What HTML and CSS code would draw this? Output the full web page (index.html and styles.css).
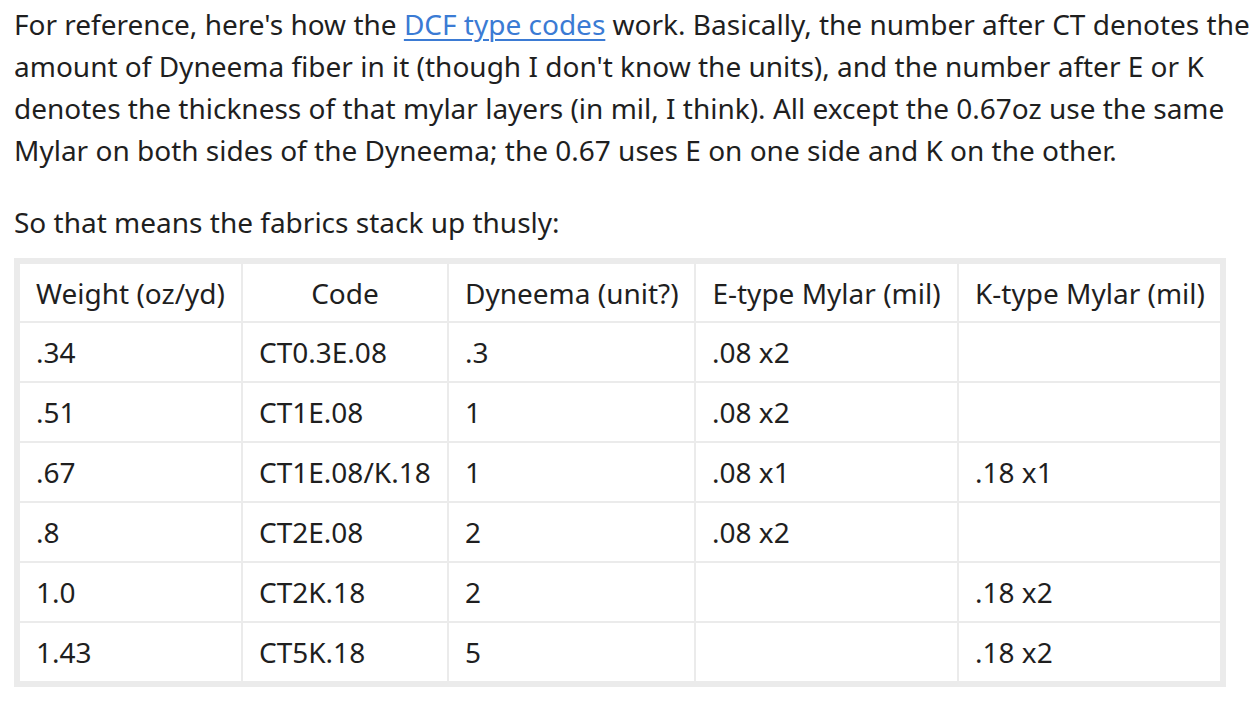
FILE: index.html
```html
<!DOCTYPE html>
<html lang="en">
<head>
<meta charset="utf-8">
<title>DCF fabrics</title>
<link rel="stylesheet" href="styles.css">
</head>
<body>
<div class="post">
  <p class="intro">For reference, here's how the <a href="#">DCF type codes</a> work. Basically, the number after CT denotes the amount of Dyneema fiber in it (though I don't know the units), and the number after E or K denotes the thickness of that mylar layers (in mil, I think). All except the 0.67oz use the same Mylar on both sides of the Dyneema; the 0.67 uses E on one side and K on the other.</p>
  <p class="lead">So that means the fabrics stack up thusly:</p>
  <table class="fabrics">
    <thead>
      <tr>
        <th class="c1">Weight (oz/yd)</th>
        <th class="c2">Code</th>
        <th class="c3">Dyneema (unit?)</th>
        <th class="c4">E-type Mylar (mil)</th>
        <th class="c5">K-type Mylar (mil)</th>
      </tr>
    </thead>
    <tbody>
      <tr><td>.34</td><td>CT0.3E.08</td><td>.3</td><td>.08 x2</td><td></td></tr>
      <tr><td>.51</td><td>CT1E.08</td><td>1</td><td>.08 x2</td><td></td></tr>
      <tr><td>.67</td><td>CT1E.08/K.18</td><td>1</td><td>.08 x1</td><td>.18 x1</td></tr>
      <tr><td>.8</td><td>CT2E.08</td><td>2</td><td>.08 x2</td><td></td></tr>
      <tr><td>1.0</td><td>CT2K.18</td><td>2</td><td></td><td>.18 x2</td></tr>
      <tr><td>1.43</td><td>CT5K.18</td><td>5</td><td></td><td>.18 x2</td></tr>
    </tbody>
  </table>
</div>
</body>
</html>
```
FILE: styles.css
```css
html, body {
  margin: 0;
  padding: 0;
  background: #ffffff;
}

body {
  font-family: "Noto Sans", "Open Sans", sans-serif;
  font-size: 28px;
  line-height: 42px;
  color: #1f1f1f;
}

.post {
  padding: 3px 8px 0 14px;
}

.post p {
  margin: 0;
}

.intro {
  margin-bottom: 30px !important;
}

.lead {
  margin-bottom: 15px !important;
}

.post a {
  color: #3b7bd4;
  text-decoration: underline;
  text-underline-offset: 4px;
  text-decoration-thickness: 2px;
}

.fabrics {
  table-layout: fixed;
  width: 1212px;
  border-collapse: separate;
  border-spacing: 2px;
  border: 4px solid #ebebeb;
  background: #ebebeb;
}

.fabrics th,
.fabrics td {
  box-sizing: border-box;
  background: #ffffff;
  font-weight: normal;
  text-align: left;
  padding: 8px 16px;
  white-space: nowrap;
}

.fabrics th {
  text-align: center;
  padding: 8px 16px 7px;
}

.fabrics .c1 { width: 221px; }
.fabrics .c2 { width: 204px; }
.fabrics .c3 { width: 245px; }
.fabrics .c4 { width: 261px; }
.fabrics .c5 { width: 261px; }
```
